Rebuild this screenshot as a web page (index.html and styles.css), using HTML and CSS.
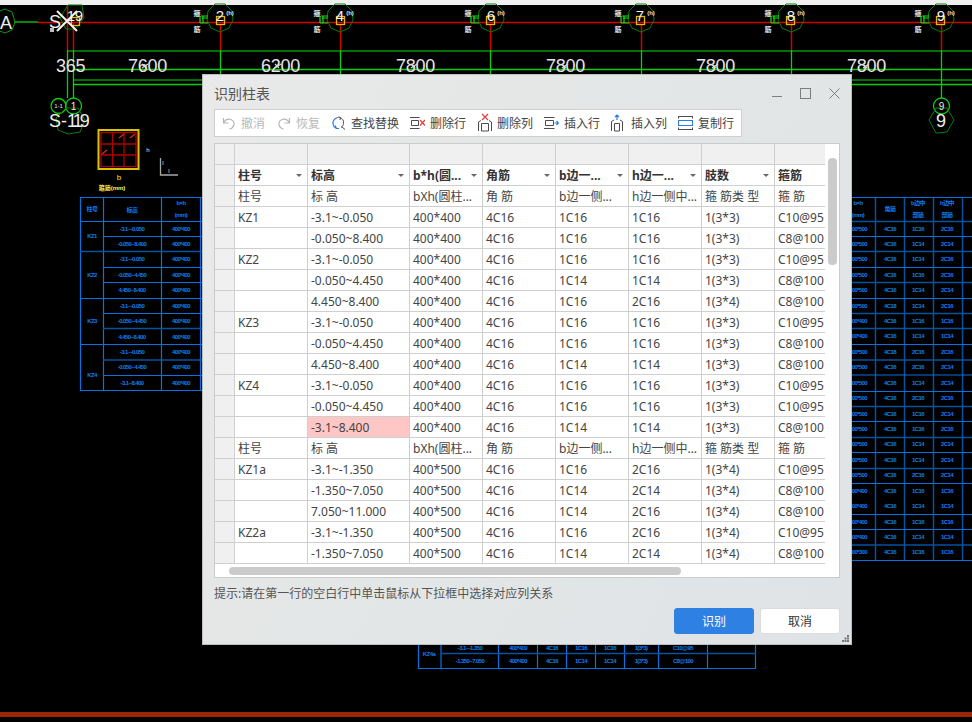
FILE: index.html
```html
<!DOCTYPE html>
<html lang="zh">
<head>
<meta charset="utf-8">
<title>识别柱表</title>
<link rel="stylesheet" href="styles.css">
</head>
<body>
<main class="desk">
<svg class="cad" width="972" height="722" viewBox="0 0 972 722">
  <defs>
    <g id="node">
      <polygon class="oct" points="-5,-14 5,-14 12,-7 13,2 9,10 0,14 -9,10 -13,2 -12,-7"/>
      <text class="glyph" x="-23" y="-2">箍</text>
      <text class="glyph" x="-23" y="14">筋</text>
      <path class="tick" d="M-19 -2H-12M-20 5H-12M-20 -2V5M-17 -2V5M-18 0H-12"/>
      <text class="tag" x="10" y="-3">(h)</text>
    </g>
    <path id="mark" d="M-3 2L3 -2M-3 -2L1 2"/>
  </defs>

  <rect class="strip" x="0" y="0" width="972" height="5"/>

  <!-- grid lines -->
  <g class="gdim">
    <path d="M67 51H972M73 80H972"/>
  </g>
  <g class="gbright">
    <path d="M73 69.500H972M73 84.500H972"/>
    <path d="M67.500 50V98M73.500 50V98M220.500 50V75M340.500 50V75M490.500 50V75M641.500 50V75M791.500 50V75M941.500 50V98"/>
    <path d="M14 22H38"/>
  </g>
  <g class="red">
    <path d="M38 22.500H972"/>
    <path d="M67.500 5V50M73.500 22V50M220.500 24V50M340.500 24V50M490.500 24V50M641.500 24V50M791.500 24V50M941.500 24V50"/>
  </g>

  <!-- axis bubbles on top -->
  <use href="#node" x="220" y="18"/>
  <use href="#node" x="340" y="18"/>
  <use href="#node" x="491" y="18"/>
  <use href="#node" x="641" y="18"/>
  <use href="#node" x="791" y="18"/>
  <use href="#node" x="941" y="18"/>
  <polygon class="oct" points="68,5 82,5 84,18 75,29 66,29 60,18"/>
  <g class="ysq">
    <rect x="216.500" y="16.500" width="8" height="8"/>
    <rect x="336.500" y="16.500" width="8" height="8"/>
    <rect x="486.500" y="16.500" width="8" height="8"/>
    <rect x="636.500" y="16.500" width="8" height="8"/>
    <rect x="786.500" y="16.500" width="8" height="8"/>
    <rect x="936.500" y="16.500" width="8" height="8"/>
    <rect x="71.500" y="17.500" width="8" height="8"/>
  </g>
  <g class="bubble-text">
    <text x="220" y="21">2</text>
    <text x="340" y="21">4</text>
    <text x="491" y="21">6</text>
    <text x="640" y="21">7</text>
    <text x="791" y="21">8</text>
    <text x="941" y="21">9</text>
    <text x="71" y="21">1</text>
    <text x="79" y="21">9</text>
  </g>

  <!-- axis A -->
  <polygon class="oct-b" points="5,9 12,12 15,22 12,30 5,33 -3,30 -6,22 -3,12"/>
  <text class="big" x="0" y="29">A</text>
  <text class="big" x="49" y="28">S</text>
  <path class="blobs" d="M50 28h4v4h-4z"/>
  <path class="xmark" d="M57 11L77 31M77 11L57 31"/>

  <!-- dimensions -->
  <g class="dims">
    <text x="56" y="72">365</text>
    <text x="128" y="72">7600</text>
    <text x="261" y="72">6200</text>
    <text x="396" y="72">7800</text>
    <text x="546" y="72">7800</text>
    <text x="696" y="72">7800</text>
    <text x="847" y="72">7800</text>
  </g>
  <g class="marks">
    <use href="#mark" x="145" y="66"/>
    <use href="#mark" x="278" y="66"/>
    <use href="#mark" x="414" y="66"/>
    <use href="#mark" x="565" y="66"/>
    <use href="#mark" x="715" y="66"/>
    <use href="#mark" x="866" y="66"/>
  </g>

  <!-- lower bubbles -->
  <g class="gbright">
    <circle cx="58.500" cy="106" r="7.500"/>
    <circle cx="73.500" cy="106" r="8"/>
    <circle cx="941.500" cy="106" r="8"/>
  </g>
  <polygon class="oct" points="66,108 78,108 85,120 80,132 68,134 58,130 56,118"/>
  <polygon class="oct" points="936,108 947,108 954,120 947,132 936,133 929,120"/>
  <text class="tiny-w" x="58.500" y="108">1-1</text>
  <text class="small-w" x="73.500" y="110">1</text>
  <text class="small-w" x="941.500" y="110">9</text>
  <text class="big" x="49" y="127">S-</text>
  <text class="big tight" x="67" y="127">119</text>
  <text class="big" x="936" y="127">9</text>

  <!-- column section -->
  <rect class="sec-out" x="98.500" y="130" width="40" height="39"/>
  <rect class="sec-in" x="101" y="132.500" width="35" height="34"/>
  <path class="sec-in" d="M112.500 133V166M124 133V166M101 144H136M101 155H136"/>
  <path class="sec-hi" d="M119 138L124 134M130 138L135 134M102 154L107 150"/>
  <text class="yl" x="119" y="180">b</text>
  <text class="yl-s" x="112" y="190">箍筋(mm)</text>
  <text class="tiny-w" x="148" y="152">h</text>
  <path class="ucs" d="M160.500 158V175H178"/>
  <text class="tiny-w" x="163" y="165">l</text>
  <text class="tiny-w" x="169" y="173">l</text>

  <!-- left table -->
  <g class="bl-bright">
    <path d="M80.500 197V391M103.500 197V391M161.500 197V391M200.500 197V391"/>
    <path d="M80 197.500H202M80 221.500H202M103 236.500H202M103 267.500H202M103 282.500H202M80 298.500H202M103 313.500H202M80 344.500H202M103 375.500H202M80 390.500H202"/>
  </g>
  <g class="bl-dim">
    <path d="M80 251.500H202M103 328.500H202M103 360H202"/>
  </g>
  <g class="bt">
    <text x="92" y="211">柱号</text><text x="132" y="212">标高</text><text x="181" y="205">b×h</text><text x="181" y="217">(mm)</text>
    <text x="92" y="238">KZ1</text><text x="92" y="277">KZ2</text><text x="92" y="323">KZ3</text><text x="92" y="377">KZ4</text>
    <text x="132" y="231">-3.1~-0.050</text><text x="181" y="231">400*400</text>
    <text x="132" y="246">-0.050~8.400</text><text x="181" y="246">400*400</text>
    <text x="132" y="261">-3.1~-0.050</text><text x="181" y="261">400*400</text>
    <text x="132" y="277">-0.050~4.450</text><text x="181" y="277">400*400</text>
    <text x="132" y="292">4.450~8.400</text><text x="181" y="292">400*400</text>
    <text x="132" y="308">-3.1~-0.050</text><text x="181" y="308">400*400</text>
    <text x="132" y="323">-0.050~4.450</text><text x="181" y="323">400*400</text>
    <text x="132" y="339">4.450~8.400</text><text x="181" y="339">400*400</text>
    <text x="132" y="354">-3.1~-0.050</text><text x="181" y="354">400*400</text>
    <text x="132" y="369">-0.050~4.450</text><text x="181" y="369">400*400</text>
    <text x="132" y="385">-3.1~8.400</text><text x="181" y="385">400*400</text>
  </g>

  <!-- right table -->
  <g class="bl-dim">
    <path d="M875.500 197V560M904.500 197V560M933.500 197V560M962.500 197V560"/>
    <path d="M850 221.500H972M850 251.500H972M850 282.500H972M850 313.500H972M850 328.500H972M850 360H972M850 406.500H972M850 437.500H972M850 468.500H972M850 545H972"/>
  </g>
  <g class="bl-bright">
    <path d="M850 197.500H972M850 236.500H972M850 267.500H972M850 298.500H972M850 344.500H972M850 375H972M850 391.500H972M850 421.500H972M850 452.500H972M850 483.500H972M850 514.500H972M850 529.500H972M850 560.500H972"/>
  </g>
  <g class="bt">
    <text x="858" y="205">b×h</text><text x="858" y="217">(mm)</text><text x="890" y="211">角筋</text>
    <text x="918" y="205">b边中</text><text x="918" y="217">部筋</text><text x="947" y="205">h边中</text><text x="947" y="217">部筋</text>
    <text x="858" y="231">400*500</text><text x="890" y="231">4C16</text><text x="918" y="231">1C16</text><text x="947" y="231">2C16</text>
    <text x="858" y="246">400*500</text><text x="890" y="246">4C16</text><text x="918" y="246">1C14</text><text x="947" y="246">2C14</text>
    <text x="858" y="261">400*500</text><text x="890" y="261">4C16</text><text x="918" y="261">1C14</text><text x="947" y="261">2C16</text>
    <text x="858" y="277">400*500</text><text x="890" y="277">4C16</text><text x="918" y="277">1C16</text><text x="947" y="277">2C16</text>
    <text x="858" y="292">400*500</text><text x="890" y="292">4C16</text><text x="918" y="292">1C14</text><text x="947" y="292">2C14</text>
    <text x="858" y="308">400*500</text><text x="890" y="308">4C18</text><text x="918" y="308">1C14</text><text x="947" y="308">2C16</text>
    <text x="858" y="323">400*400</text><text x="890" y="323">4C16</text><text x="918" y="323">1C16</text><text x="947" y="323">1C16</text>
    <text x="858" y="338">400*400</text><text x="890" y="338">4C16</text><text x="918" y="338">1C14</text><text x="947" y="338">1C14</text>
    <text x="858" y="354">400*500</text><text x="890" y="354">4C18</text><text x="918" y="354">2C16</text><text x="947" y="354">2C16</text>
    <text x="858" y="369">400*500</text><text x="890" y="369">4C16</text><text x="918" y="369">2C16</text><text x="947" y="369">2C14</text>
    <text x="858" y="385">400*500</text><text x="890" y="385">4C16</text><text x="918" y="385">1C14</text><text x="947" y="385">2C14</text>
    <text x="858" y="400">400*500</text><text x="890" y="400">4C16</text><text x="918" y="400">2C16</text><text x="947" y="400">2C16</text>
    <text x="858" y="416">400*500</text><text x="890" y="416">4C16</text><text x="918" y="416">1C16</text><text x="947" y="416">2C14</text>
    <text x="858" y="431">400*500</text><text x="890" y="431">4C16</text><text x="918" y="431">1C16</text><text x="947" y="431">2C16</text>
    <text x="858" y="446">400*500</text><text x="890" y="446">4C16</text><text x="918" y="446">1C14</text><text x="947" y="446">2C14</text>
    <text x="858" y="462">400*500</text><text x="890" y="462">4C16</text><text x="918" y="462">1C14</text><text x="947" y="462">2C14</text>
    <text x="858" y="477">400*500</text><text x="890" y="477">4C16</text><text x="918" y="477">2C16</text><text x="947" y="477">2C14</text>
    <text x="858" y="493">400*400</text><text x="890" y="493">4C16</text><text x="918" y="493">1C16</text><text x="947" y="493">1C16</text>
    <text x="858" y="508">400*400</text><text x="890" y="508">4C16</text><text x="918" y="508">1C14</text><text x="947" y="508">1C14</text>
    <text x="858" y="524">400*400</text><text x="890" y="524">4C16</text><text x="918" y="524">1C16</text><text x="947" y="524">1C16</text>
    <text x="858" y="539">400*400</text><text x="890" y="539">4C16</text><text x="918" y="539">1C14</text><text x="947" y="539">1C14</text>
    <text x="858" y="554">400*300</text><text x="890" y="554">4C16</text><text x="918" y="554">1C16</text><text x="947" y="554">1C16</text>
  </g>

  <!-- bottom table -->
  <g class="bl-bright">
    <path d="M418.500 640V668M441 640V668M498.500 640V668M537.500 640V668M566.500 640V668M595.500 640V668M624.500 640V668M658.500 640V668M707.500 640V668M755.500 640V668"/>
    <path d="M418 668.500H756"/>
  </g>
  <g class="bl-dim"><path d="M441 653.500H756"/></g>
  <g class="bt">
    <text x="429" y="656">KZ4a</text>
    <text x="470" y="650">-3.1~-1.350</text><text x="518" y="650">400*400</text><text x="552" y="650">4C16</text><text x="581" y="650">1C16</text><text x="610" y="650">1C16</text><text x="641" y="650">1(3*3)</text><text x="683" y="650">C10@95</text>
    <text x="470" y="663">-1.350~7.050</text><text x="518" y="663">400*400</text><text x="552" y="663">4C16</text><text x="581" y="663">1C14</text><text x="610" y="663">1C14</text><text x="641" y="663">1(3*3)</text><text x="683" y="663">C8@100</text>
  </g>

  <rect class="bar" x="0" y="712" width="972" height="5"/>
</svg>

<section class="dialog">
  <header class="titlebar">
    <h1 class="title">识别柱表</h1>
    <div class="winctl">
      <svg width="10" height="11" viewBox="0 0 10 11"><path class="wc" d="M0 8.500H10"/></svg>
      <svg width="11" height="11" viewBox="0 0 11 11"><rect class="wc" x="0.500" y="0.500" width="10" height="10"/></svg>
      <svg width="11" height="11" viewBox="0 0 11 11"><path class="wc" d="M0.500 0.500L10.500 10.500M10.500 0.500L0.500 10.500"/></svg>
    </div>
  </header>

  <div class="toolbar">
    <div class="tool off">
      <svg width="14" height="20" viewBox="0 0 14 20"><path class="ic-off" d="M1.500 5V10H6.500M1.500 10C3 7 6 5.500 9 6.500C12.500 8 13.500 12 10 15L7.500 16"/></svg>
      <span>撤消</span>
    </div>
    <div class="tool off">
      <svg width="15" height="20" viewBox="-2 0 15 20"><path class="ic-off" d="M11.500 5V10H6.500M11.500 10C10 7 7 5.500 4 6.500C0.500 8 -0.500 12 3 15L5.500 16"/></svg>
      <span>恢复</span>
    </div>
    <div class="tool">
      <svg width="15" height="20" viewBox="-1 0 15 20"><path class="ic-blue" d="M6 4.500C2.500 5 0.500 8 1 11C1.300 13 2.500 14.500 4 15.300"/><path class="ic-blue" d="M3 12.500L4.500 15.500L7 15.500"/><path class="ic-dark" d="M8 4.500C10.500 5.500 12 7.500 11.500 10.500C11.300 12 10.500 13.500 9 14.500M9.500 13.500L13 16.500M6 4L8.500 4.500L8 7"/></svg>
      <span>查找替换</span>
    </div>
    <div class="tool">
      <svg width="15" height="20" viewBox="0 0 15 20"><path class="ic-dark" d="M0 4.500H9.500M1.500 7.500H8.500V12.500H1.500ZM0 15.500H9.500"/><path class="ic-red" d="M10 7L15 12.500M15 7L10 12.500"/></svg>
      <span>删除行</span>
    </div>
    <div class="tool">
      <svg width="15" height="20" viewBox="-1 0 15 20"><path class="ic-dark" d="M0.500 18V9L3 7.500M13.500 18V9L11 7.500M3.500 10.500H10.500V18H3.500Z"/><path class="ic-red" d="M4 1L10 7M10 1L4 7"/></svg>
      <span>删除列</span>
    </div>
    <div class="tool">
      <svg width="15" height="20" viewBox="0 0 15 20"><path class="ic-dark" d="M0 4.500H10.500M1.500 7.500H9.500V12.500H1.500ZM0 15.500H10.500"/><path class="ic-blue" d="M10.500 10H14.500M12.500 8L14.500 10L12.500 12"/></svg>
      <span>插入行</span>
    </div>
    <div class="tool">
      <svg width="15" height="20" viewBox="0 0 15 20"><path class="ic-dark" d="M0.500 18V8.500L3 7M11.500 18V8.500L9 7M3.500 10.500H8.500V18H3.500Z"/><path class="ic-blue" d="M6 7V2M4 4L6 2L8 4"/></svg>
      <span>插入列</span>
    </div>
    <div class="tool">
      <svg width="15" height="20" viewBox="0 0 15 20"><path class="ic-dark" d="M0 3.500H15M0 16.500H15M0.500 3.500V5.500M14.500 3.500V5.500M0.500 14.500V16.500M14.500 14.500V16.500"/><path class="ic-blue" d="M0.500 7.500H14.500V12.500H0.500Z"/></svg>
      <span>复制行</span>
    </div>
  </div>

  <div class="sheet">
    <div class="sheet-view">
      <table class="grid">
        <colgroup>
          <col class="c-idx"><col class="c-w73"><col class="c-w102"><col class="c-w73"><col class="c-w73"><col class="c-w73"><col class="c-w73"><col class="c-w73"><col class="c-w73">
        </colgroup>
        <thead>
          <tr class="blank"><th></th><th></th><th></th><th></th><th></th><th></th><th></th><th></th><th></th></tr>
          <tr class="heads">
            <th class="idx"></th>
            <th><div class="hcell">柱号<i class="caret"></i></div></th>
            <th><div class="hcell">标高<i class="caret"></i></div></th>
            <th><div class="hcell">b*h(圆...<i class="caret"></i></div></th>
            <th><div class="hcell">角筋<i class="caret"></i></div></th>
            <th><div class="hcell">b边一...<i class="caret"></i></div></th>
            <th><div class="hcell">h边一...<i class="caret"></i></div></th>
            <th><div class="hcell">肢数<i class="caret"></i></div></th>
            <th><div class="hcell">箍筋<i class="caret"></i></div></th>
          </tr>
        </thead>
        <tbody>
          <tr><td class="idx"></td><td>柱号</td><td>标 高</td><td>bXh(圆柱...</td><td>角 筋</td><td>b边一侧...</td><td>h边一侧中...</td><td>箍 筋类 型</td><td>箍 筋</td></tr>
          <tr><td class="idx"></td><td>KZ1</td><td>-3.1~-0.050</td><td>400*400</td><td>4C16</td><td>1C16</td><td>1C16</td><td>1(3*3)</td><td>C10@95</td></tr>
          <tr><td class="idx"></td><td></td><td>-0.050~8.400</td><td>400*400</td><td>4C16</td><td>1C16</td><td>1C16</td><td>1(3*3)</td><td>C8@100</td></tr>
          <tr><td class="idx"></td><td>KZ2</td><td>-3.1~-0.050</td><td>400*400</td><td>4C16</td><td>1C16</td><td>1C16</td><td>1(3*3)</td><td>C10@95</td></tr>
          <tr><td class="idx"></td><td></td><td>-0.050~4.450</td><td>400*400</td><td>4C16</td><td>1C14</td><td>1C14</td><td>1(3*3)</td><td>C8@100</td></tr>
          <tr><td class="idx"></td><td></td><td>4.450~8.400</td><td>400*400</td><td>4C16</td><td>1C16</td><td>2C16</td><td>1(3*4)</td><td>C8@100</td></tr>
          <tr><td class="idx"></td><td>KZ3</td><td>-3.1~-0.050</td><td>400*400</td><td>4C16</td><td>1C16</td><td>1C16</td><td>1(3*3)</td><td>C10@95</td></tr>
          <tr><td class="idx"></td><td></td><td>-0.050~4.450</td><td>400*400</td><td>4C16</td><td>1C16</td><td>1C16</td><td>1(3*3)</td><td>C8@100</td></tr>
          <tr><td class="idx"></td><td></td><td>4.450~8.400</td><td>400*400</td><td>4C16</td><td>1C14</td><td>1C14</td><td>1(3*3)</td><td>C8@100</td></tr>
          <tr><td class="idx"></td><td>KZ4</td><td>-3.1~-0.050</td><td>400*400</td><td>4C16</td><td>1C16</td><td>1C16</td><td>1(3*3)</td><td>C10@95</td></tr>
          <tr><td class="idx"></td><td></td><td>-0.050~4.450</td><td>400*400</td><td>4C16</td><td>1C16</td><td>1C16</td><td>1(3*3)</td><td>C10@95</td></tr>
          <tr><td class="idx"></td><td></td><td class="err">-3.1~8.400</td><td>400*400</td><td>4C16</td><td>1C14</td><td>1C14</td><td>1(3*3)</td><td>C8@100</td></tr>
          <tr><td class="idx"></td><td>柱号</td><td>标 高</td><td>bXh(圆柱...</td><td>角 筋</td><td>b边一侧...</td><td>h边一侧中...</td><td>箍 筋类 型</td><td>箍 筋</td></tr>
          <tr><td class="idx"></td><td>KZ1a</td><td>-3.1~-1.350</td><td>400*500</td><td>4C16</td><td>1C16</td><td>2C16</td><td>1(3*4)</td><td>C10@95</td></tr>
          <tr><td class="idx"></td><td></td><td>-1.350~7.050</td><td>400*500</td><td>4C16</td><td>1C14</td><td>2C14</td><td>1(3*4)</td><td>C8@100</td></tr>
          <tr><td class="idx"></td><td></td><td>7.050~11.000</td><td>400*500</td><td>4C16</td><td>1C14</td><td>2C16</td><td>1(3*4)</td><td>C8@100</td></tr>
          <tr><td class="idx"></td><td>KZ2a</td><td>-3.1~-1.350</td><td>400*500</td><td>4C16</td><td>1C16</td><td>2C16</td><td>1(3*4)</td><td>C10@95</td></tr>
          <tr><td class="idx"></td><td></td><td>-1.350~7.050</td><td>400*500</td><td>4C16</td><td>1C14</td><td>2C14</td><td>1(3*4)</td><td>C8@100</td></tr>
        </tbody>
      </table>
    </div>
    <div class="thumb-v"></div>
    <div class="thumb-h"></div>
  </div>

  <p class="hint">提示:请在第一行的空白行中单击鼠标从下拉框中选择对应列关系</p>

  <div class="actions">
    <button class="btn primary" type="button">识别</button>
    <button class="btn" type="button">取消</button>
  </div>

  <svg class="grip" width="7" height="7" viewBox="0 0 7 7">
    <path class="grip-dots" d="M5 0h2v2H5zM2.500 2.500h2v2h-2zM5 2.500h2v2H5zM0 5h2v2H0zM2.500 5h2v2h-2zM5 5h2v2H5z"/>
  </svg>
</section>
</main>
</body>
</html>
```

FILE: styles.css
```css
* { box-sizing: border-box; }

html, body {
  margin: 0;
  padding: 0;
  background: #000;
  overflow: hidden;
}

body {
  font-family: "Noto Sans", "Noto Sans CJK SC", sans-serif;
  font-size: 12px;
  color: #444;
}

.desk {
  position: relative;
  width: 972px;
  height: 722px;
  overflow: hidden;
}

/* ---------- CAD canvas ---------- */
.cad { position: absolute; left: 0; top: 0; display: block; }
.cad text { font-family: "Liberation Sans", "Noto Sans CJK SC", sans-serif; }

.strip { fill: #f0f0f0; }
.bar { fill: #9c2604; }

.gdim path { fill: none; stroke: #079107; stroke-width: 1.500; }
.gbright path, .gbright circle { fill: none; stroke: #0ccf0c; stroke-width: 1.300; }
.red path { fill: none; stroke: #d40000; stroke-width: 1.500; }

.oct, .oct-b { fill: none; stroke: #077f07; stroke-width: 1; }
.oct-b { stroke: #0a9a0a; }
.glyph { fill: #e4e4e4; font-size: 7px; font-weight: 700; text-anchor: middle; }
.tag { fill: #e0e0e0; font-size: 6px; font-weight: 700; text-anchor: middle; }
.tick { fill: none; stroke: #12e012; stroke-width: 1.200; }
.ysq rect { fill: none; stroke: #e6b800; stroke-width: 1.300; }

.bubble-text text { fill: #f0f0f0; font-size: 15px; text-anchor: middle; }
.big { fill: #efefef; font-size: 18px; }
.tight { letter-spacing: -3px; }
.blobs { fill: #bdbdbd; }
.xmark { fill: none; stroke: #f4f4f4; stroke-width: 2; }
.dims text { fill: #e6e6e6; font-size: 18px; letter-spacing: -0.300px; }
.marks { fill: none; stroke: #d8d8d8; stroke-width: 1.200; }
.tiny-w { fill: #e0e0e0; font-size: 6px; text-anchor: middle; }
.small-w { fill: #e8e8e8; font-size: 10px; text-anchor: middle; }

.sec-out { fill: none; stroke: #d6c400; stroke-width: 2; }
.sec-in { fill: none; stroke: #b00000; stroke-width: 1.300; }
.sec-hi { fill: none; stroke: #e82020; stroke-width: 1.300; }
.yl { fill: #ffe900; font-size: 8px; text-anchor: middle; }
.yl-s { fill: #fbf65a; font-size: 6px; font-weight: 700; text-anchor: middle; }
.ucs { fill: none; stroke: #a8a8a8; stroke-width: 1.300; }

.bl-bright path { fill: none; stroke: #0673e0; stroke-width: 1.200; }
.bl-dim path { fill: none; stroke: #05529f; stroke-width: 1.500; }
.bt text { fill: #0d7df0; font-size: 6px; font-weight: 700; letter-spacing: -0.600px; text-anchor: middle; }

/* ---------- dialog window ---------- */
.dialog {
  position: absolute;
  left: 202px;
  top: 74px;
  width: 650px;
  height: 571px;
  padding: 0 11px 0 11px;
  display: flex;
  flex-direction: column;
  background: linear-gradient(120deg, #e9e9e9 0%, #e3e6e6 50%, #e0e3e6 100%);
  border: 1px solid #bdbdbd;
}

.titlebar {
  height: 34px;
  flex: none;
  padding-top: 2px;
  display: flex;
  align-items: center;
  justify-content: space-between;
}

.title {
  margin: 0;
  font-size: 14px;
  font-weight: 400;
  color: #555;
}

.winctl {
  display: flex;
  align-items: center;
  gap: 18px;
  padding-right: 0;
}

.winctl svg { display: block; }
.wc { fill: none; stroke: #7d7d7d; stroke-width: 1; }

.toolbar {
  flex: none;
  width: 528px;
  height: 28px;
  padding-left: 7px;
  display: flex;
  align-items: center;
  gap: 11px;
  background: #fff;
  border: 1px solid #cfcfcf;
}

.tool {
  display: flex;
  align-items: center;
  gap: 5px;
  white-space: nowrap;
  color: #444;
}

.tool svg { display: block; flex: none; }
.tool.off { color: #b9b9b9; }
.ic-off { fill: none; stroke: #b5b5b5; stroke-width: 1.200; }
.ic-dark { fill: none; stroke: #4c4c4c; stroke-width: 1; }
.ic-blue { fill: none; stroke: #2a7de1; stroke-width: 1.200; }
.ic-red { fill: none; stroke: #e23b3b; stroke-width: 1.200; }

/* ---------- sheet ---------- */
.sheet {
  position: relative;
  flex: none;
  margin-top: 6px;
  width: 626px;
  height: 435px;
  background: #fff;
  border: 1px solid #cbcbcb;
}

.sheet-view {
  width: 610px;
  height: 420px;
  overflow: hidden;
}

.grid {
  width: 633px;
  table-layout: fixed;
  border-collapse: separate;
  border-spacing: 0;
}

.c-idx { width: 20px; }
.c-w73 { width: 73px; }
.c-w102 { width: 102px; }

.grid th, .grid td {
  height: 21px;
  padding: 1px 0 0 3px;
  font-size: 12px;
  line-height: 19px;
  white-space: nowrap;
  overflow: hidden;
  text-align: left;
  vertical-align: middle;
  color: #444;
  background: #fff;
  border-right: 1px solid #cfcfcf;
  border-bottom: 1px solid #cfcfcf;
}

.grid .blank th { background: #f0f0f0; }
.grid .idx { background: #f0f0f0; }
.grid .heads th { font-weight: 700; color: #333; }
.grid .err { background: #ffc6c6; }

.hcell {
  display: flex;
  align-items: center;
  justify-content: space-between;
  padding-right: 5px;
}

.caret {
  width: 0;
  height: 0;
  border-left: 3px solid transparent;
  border-right: 3px solid transparent;
  border-top: 3px solid #666;
}

.thumb-v {
  position: absolute;
  left: 613px;
  top: 14px;
  width: 9px;
  height: 107px;
  border-radius: 4px;
  background: #cbcbcb;
}

.thumb-h {
  position: absolute;
  left: 14px;
  top: 423px;
  width: 452px;
  height: 8px;
  border-radius: 4px;
  background: #cbcbcb;
}

/* ---------- footer ---------- */
.hint {
  margin: 8px 0 0;
  flex: none;
  height: 16px;
  line-height: 16px;
  font-size: 12px;
  color: #555;
}

.actions {
  flex: none;
  margin-top: 6px;
  display: flex;
  justify-content: flex-end;
  gap: 6px;
  width: 626px;
}

.btn {
  width: 80px;
  height: 26px;
  padding: 0;
  font: inherit;
  color: #333;
  background: #fff;
  border: 1px solid #dcdcdc;
  border-radius: 3px;
}

.btn.primary {
  color: #fff;
  background: #2f80e3;
  border-color: #2f80e3;
}

.grip { position: absolute; right: 2px; bottom: 2px; }
.grip-dots { fill: #777; }
```
